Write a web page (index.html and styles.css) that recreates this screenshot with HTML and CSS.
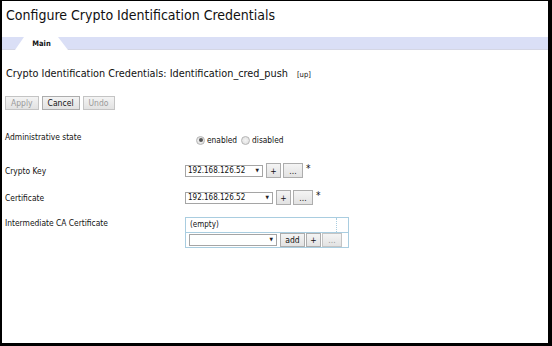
FILE: index.html
```html
<!DOCTYPE html>
<html lang="en">
<head>
    <meta charset="UTF-8">
    <title>Configure Crypto Identification Credentials</title>
    <link rel="stylesheet" href="styles.css">
</head>
<body>
    <div class="page">
        <h1 class="title">Configure Crypto Identification Credentials</h1>
        <div class="tab-bar">
            <div class="tab">Main</div>
        </div>
        <h2 class="subtitle">Crypto Identification Credentials: Identification_cred_push <span class="up">[up]</span></h2>
        <div class="actions">
            <span class="btn disabled">Apply</span>
            <span class="btn">Cancel</span>
            <span class="btn disabled">Undo</span>
        </div>
        <div class="form">
            <div class="row row-state">
                <label class="lbl">Administrative state</label>
                <div class="ctrl radios">
                    <span class="radio checked"></span><span class="radio-text">enabled</span>
                    <span class="radio"></span><span class="radio-text">disabled</span>
                </div>
            </div>
            <div class="row">
                <label class="lbl">Crypto Key</label>
                <div class="ctrl">
                    <span class="select w78">192.168.126.52<span class="arrow">&#9660;</span></span>
                    <span class="btn sm plus">+</span>
                    <span class="btn sm dots">...</span>
                    <span class="req">*</span>
                </div>
            </div>
            <div class="row">
                <label class="lbl">Certificate</label>
                <div class="ctrl">
                    <span class="select w88">192.168.126.52<span class="arrow">&#9660;</span></span>
                    <span class="btn sm plus">+</span>
                    <span class="btn sm dots">...</span>
                    <span class="req">*</span>
                </div>
            </div>
            <div class="row row-list">
                <label class="lbl">Intermediate CA Certificate</label>
                <div class="list-box">
                    <div class="list-item">
                        <span class="item-text">(empty)</span>
                        <span class="item-cell"></span>
                    </div>
                    <div class="list-add">
                        <span class="select w88"><span class="arrow">&#9660;</span></span>
                        <span class="btn sm add">add</span>
                        <span class="btn sm plus">+</span>
                        <span class="btn sm dots disabled">...</span>
                    </div>
                </div>
            </div>
        </div>
    </div>
</body>
</html>
```

FILE: styles.css
```css
* {
    box-sizing: border-box;
}

html {
    background-color: #000;
}

body {
    margin: 0;
    padding: 1px 4px 3px 2px;
    font-family: "DejaVu Sans Condensed", "DejaVu Sans", sans-serif;
    color: #111;
}

.page {
    background-color: #fff;
    height: 342px;
    overflow: hidden;
}

.title {
    margin: 0;
    padding: 5px 0 0 4px;
    font-size: 14px;
    font-weight: normal;
    line-height: 18px;
}

.tab-bar {
    margin-top: 13px;
    height: 13px;
    background-color: #dadff6;
    border-bottom: 1px solid #d4d6e4;
    padding-left: 13px;
}

.tab {
    width: 53px;
    height: 13px;
    background-color: #fff;
    clip-path: polygon(9px 0, 43px 0, 100% 100%, 0 100%);
    font-size: 7.5px;
    font-weight: bold;
    text-align: center;
    line-height: 14px;
}

.subtitle {
    margin: 17px 0 0 4px;
    font-size: 10.8px;
    font-weight: normal;
    line-height: 13px;
}

.up {
    font-size: 7.5px;
    margin-left: 6px;
}

.actions {
    display: flex;
    gap: 3px;
    margin: 15px 0 0 3px;
}

.btn {
    display: inline-flex;
    align-items: center;
    justify-content: center;
    height: 14px;
    padding: 0 5px;
    font-size: 8.5px;
    color: #111;
    background: linear-gradient(#f4f4f4, #e2e2e2);
    border: 1px solid #adadad;
}

.btn.disabled {
    color: #9a9a9a;
    border-color: #c4c4c4;
}

.form {
    margin: 15px 0 0 3px;
}

.row {
    display: flex;
    align-items: center;
    height: 27px;
}

.row-state {
    height: 30px;
    margin-bottom: 2px;
}

.row-state .lbl {
    margin-top: -6px;
}

.lbl {
    width: 180px;
    font-size: 8.4px;
}

.ctrl {
    display: flex;
    align-items: center;
    gap: 2px;
}

.radios {
    margin-left: 11px;
    gap: 0;
}

.radio {
    width: 9px;
    height: 9px;
    border-radius: 50%;
    border: 1px solid #b5b5b5;
    background: radial-gradient(#f4f4f4, #dcdcdc);
    display: inline-flex;
    align-items: center;
    justify-content: center;
}

.radio.checked::after {
    content: "";
    width: 4px;
    height: 4px;
    border-radius: 50%;
    background-color: #555;
}

.radio-text {
    font-size: 8.3px;
    margin: 0 4px 0 2px;
}

.select {
    position: relative;
    display: inline-flex;
    align-items: center;
    height: 12px;
    padding-left: 2px;
    border: 1px solid #a5a5a5;
    font-size: 8px;
    background-color: #fff;
    margin-right: 1px;
}

.arrow {
    position: absolute;
    right: 3px;
    top: 1px;
    font-size: 5px;
    color: #222;
}

.w78 {
    width: 78px;
}

.w88 {
    width: 88px;
}

.btn.sm {
    height: 15px;
    padding: 0;
}

.plus {
    width: 15px;
}

.dots {
    width: 20px;
}

.add {
    width: 25px;
}

.req {
    font-size: 10px;
    margin-left: 1px;
    align-self: flex-start;
}

.row-list {
    align-items: flex-start;
    height: auto;
    margin-top: 6px;
}

.row-list .lbl {
    margin-top: 1px;
}

.list-box {
    width: 164px;
    border: 1px solid #a9cde0;
}

.list-item {
    display: flex;
    height: 15px;
    border-bottom: 1px solid #a9cde0;
    font-size: 8px;
}

.item-text {
    flex: 1;
    padding: 2px 0 0 4px;
}

.item-cell {
    width: 12px;
    border-left: 1px dotted #a9cde0;
}

.list-add {
    display: flex;
    align-items: center;
    gap: 1px;
    height: 14px;
    padding: 0 3px;
}

.list-add .btn.sm {
    height: 14px;
}

.list-add .select {
    margin-right: 2px;
}
```
